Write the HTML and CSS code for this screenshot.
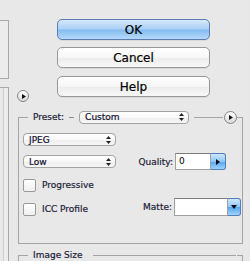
FILE: index.html
```html
<!DOCTYPE html>
<html lang="en">
<head>
    <meta charset="UTF-8">
    <title>Save for Web</title>
    <link rel="stylesheet" href="styles.css">
</head>
<body>
    <div class="page">
        <div class="side">
            <div class="side-box top"></div>
            <div class="side-box rest"></div>
        </div>

        <div class="main">
            <button class="btn ok">OK</button>
            <button class="btn cancel">Cancel</button>
            <div class="help-row">
                <span class="circle-btn small"><svg width="4" height="5" viewBox="0 0 4 5"><polygon points="0,0 4,2.5 0,5" fill="#111"/></svg></span>
                <button class="btn help">Help</button>
            </div>

            <div class="group">
                <div class="group-head">
                    <span class="corner-l"></span>
                    <span class="legend">Preset:</span>
                    <span class="dash"></span>
                    <div class="select preset">
                        <span>Custom</span>
                        <svg width="5" height="8" viewBox="0 0 5 8"><polygon points="0,3 2.5,0 5,3" fill="#222"/><polygon points="0,5 2.5,8 5,5" fill="#222"/></svg>
                    </div>
                    <span class="line"></span>
                    <span class="circle-btn"><svg width="4" height="5" viewBox="0 0 4 5"><polygon points="0,0 4,2.5 0,5" fill="#111"/></svg></span>
                    <span class="corner-r"></span>
                </div>
                <div class="group-body">
                    <div class="select format">
                        <span>JPEG</span>
                        <svg width="5" height="8" viewBox="0 0 5 8"><polygon points="0,3 2.5,0 5,3" fill="#222"/><polygon points="0,5 2.5,8 5,5" fill="#222"/></svg>
                    </div>

                    <div class="row quality-row">
                        <div class="select format">
                            <span>Low</span>
                            <svg width="5" height="8" viewBox="0 0 5 8"><polygon points="0,3 2.5,0 5,3" fill="#222"/><polygon points="0,5 2.5,8 5,5" fill="#222"/></svg>
                        </div>
                        <div class="field quality">
                            <label>Quality:</label>
                            <div class="input">0</div>
                            <span class="blue-btn"><svg width="4" height="6" viewBox="0 0 4 6"><polygon points="0,0 4,3 0,6" fill="#0c0c1c"/></svg></span>
                        </div>
                    </div>

                    <div class="row check-row">
                        <span class="checkbox"></span>
                        <label>Progressive</label>
                    </div>

                    <div class="row icc-row">
                        <span class="checkbox"></span>
                        <label>ICC Profile</label>
                        <div class="field matte">
                            <label>Matte:</label>
                            <div class="input wide"></div>
                            <span class="blue-btn down"><svg width="6" height="4" viewBox="0 0 6 4"><polygon points="0,0 6,0 3,4" fill="#0c0c1c"/></svg></span>
                        </div>
                    </div>
                </div>
            </div>

            <div class="group last">
                <div class="group-head">
                    <span class="corner-l"></span>
                    <span class="legend">Image Size</span>
                    <span class="line"></span>
                    <span class="corner-r"></span>
                </div>
            </div>
        </div>
    </div>
</body>
</html>
```

FILE: styles.css
```css
* {
    box-sizing: border-box;
}

body {
    margin: 0;
    width: 250px;
    height: 261px;
    overflow: hidden;
    background: #e8e8e8;
    font-family: "DejaVu Sans", "Liberation Sans", sans-serif;
    color: #1c1c3a;
}

.page {
    display: flex;
    height: 261px;
    overflow: hidden;
}

/* left preview panes */
.side {
    width: 9px;
    display: flex;
    flex-direction: column;
}

.side-box {
    border: 1px solid #a9a9a9;
    border-left: none;
    background: #ececec;
}

.side-box.top {
    margin-top: 20px;
    height: 59px;
    flex-shrink: 0;
}

.side-box.rest {
    margin-top: 8px;
    flex: 1;
    border-bottom: none;
    background: linear-gradient(90deg, #e8e8e8 3px, #cfcfcf 3px, #cfcfcf 4px, #ececec 4px);
}

.main {
    flex: 1;
    display: flex;
    flex-direction: column;
}

.main > * {
    flex-shrink: 0;
}

/* push buttons */
.btn {
    display: block;
    width: 153px;
    height: 21px;
    padding: 0;
    border: 1px solid #979797;
    border-radius: 5px;
    background: linear-gradient(#ffffff, #f6f6f6 50%, #ececec 51%, #f7f7f7);
    font-family: "DejaVu Sans", sans-serif;
    font-size: 12px;
    color: #000;
    text-align: center;
    -webkit-text-stroke: 0.2px #000;
    box-shadow: 0 1px 0 rgba(0, 0, 0, 0.06);
}

.btn.ok {
    margin: 19px 0 0 48px;
    border-color: #5d7cb2;
    background: linear-gradient(#d6e8fb, #a9cff6 48%, #86bcf1 52%, #b4dafb);
}

.btn.cancel {
    margin: 7px 0 0 48px;
}

.help-row {
    display: flex;
    align-items: flex-start;
    margin-top: 8px;
}

.btn.help {
    margin-left: 28px;
}

.circle-btn {
    width: 13px;
    height: 13px;
    border: 1px solid #858585;
    border-radius: 50%;
    background: linear-gradient(#ffffff, #d9d9d9);
    display: flex;
    align-items: center;
    justify-content: center;
    padding-left: 1px;
    flex-shrink: 0;
}

.circle-btn.small {
    width: 12px;
    height: 12px;
    margin: 14px 0 0 8px;
}

/* groups */
.group {
    margin-left: 9px;
    width: 225px;
    margin-top: 8px;
}

.group.last {
    margin-top: 5px;
}

.group-head {
    display: flex;
    align-items: center;
    height: 14px;
}

.group.last .group-head {
    height: 12px;
}

.corner-l,
.corner-r {
    align-self: flex-end;
    height: 7px;
    border-top: 1px solid #a4a4a4;
}

.group.last .corner-l,
.group.last .corner-r {
    height: 6px;
}

.corner-l {
    width: 10px;
    border-left: 1px solid #a4a4a4;
}

.corner-r {
    width: 6px;
    border-right: 1px solid #a4a4a4;
}

.legend {
    font-size: 9px;
    margin: 0 5px;
    line-height: 14px;
    -webkit-text-stroke: 0.2px #1c1c3a;
}

.dash {
    width: 5px;
    border-top: 1px solid #8c8c8c;
    margin: 1px 5px 0 0;
}

.line {
    flex: 1;
    border-top: 1px solid #a4a4a4;
    margin: 1px 1px 0 5px;
}

.group-head .circle-btn {
    margin-top: 1px;
}

.group-body {
    height: 120px;
    border: 1px solid #a4a4a4;
    border-top: none;
    padding: 9px 0 0 4px;
}

/* popup menus */
.select {
    display: flex;
    align-items: center;
    justify-content: space-between;
    height: 13px;
    border: 1px solid #a3a3a3;
    border-radius: 4px;
    background: linear-gradient(#ffffff, #f8f8f8 50%, #eeeeee 51%, #f6f6f6);
    font-size: 9px;
    padding: 0 4px 0 5px;
    color: #101030;
    -webkit-text-stroke: 0.2px #101030;
}

.select.preset {
    width: 110px;
}

.select.format {
    width: 93px;
}

.row {
    display: flex;
}

.quality-row {
    align-items: center;
    height: 17px;
    margin-top: 7px;
}

.field {
    display: flex;
    align-items: center;
    margin-left: auto;
}

.field label {
    font-size: 9px;
    margin-right: 2px;
    -webkit-text-stroke: 0.2px #1c1c3a;
}

.field.quality {
    margin-right: 16px;
}

.input {
    width: 36px;
    height: 17px;
    background: #fff;
    border: 1px solid #a0a0a0;
    border-top-color: #7c7c7c;
    font-size: 9px;
    padding: 2px 0 0 3px;
    color: #000;
}

.input.wide {
    width: 54px;
    height: 18px;
}

.blue-btn {
    width: 15px;
    height: 17px;
    border: 1px solid #4f7fbf;
    border-left: none;
    border-radius: 0 3px 3px 0;
    background: linear-gradient(#cfe7fc, #8fc6f6 50%, #55a6ee 52%, #9fd3fb);
    display: flex;
    align-items: center;
    justify-content: center;
}

.blue-btn.down {
    width: 13px;
    height: 18px;
}

.checkbox {
    width: 13px;
    height: 13px;
    border: 1px solid #9a9a9a;
    border-radius: 2px;
    background: linear-gradient(#ffffff, #f0f0f0);
    flex-shrink: 0;
}

.row > label {
    font-size: 9px;
    margin-left: 6px;
    line-height: 13px;
    -webkit-text-stroke: 0.2px #1c1c3a;
}

.check-row {
    margin-top: 9px;
    align-items: center;
}

.icc-row {
    margin-top: 6px;
    align-items: flex-end;
    height: 18px;
}

.icc-row .field {
    align-self: stretch;
    margin-right: 1px;
}
```
